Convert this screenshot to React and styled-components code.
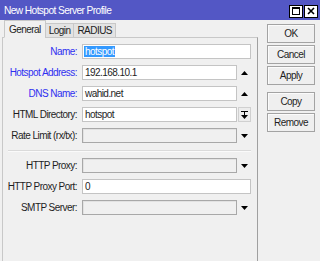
import React from "react";
import styled, { createGlobalStyle } from "styled-components";

const GlobalStyle = createGlobalStyle`
  html, body {
    margin: 0;
    padding: 0;
    background: #f0f0f0;
    overflow: hidden;
  }
  body {
    font-family: "Liberation Sans", Arial, sans-serif;
    font-size: 10px;
    letter-spacing: -0.55px;
    color: #1e1e1e;
  }
`;

export const Window = styled.div`
  width: 320px;
  height: 261px;
  display: flex;
  flex-direction: column;
  background: #f0f0f0;
  overflow: hidden;
`;

export const TitleBar = styled.div`
  height: 20px;
  flex: none;
  display: flex;
  align-items: center;
  justify-content: space-between;
  padding: 0 2px 0 4px;
  background: #5357c5;
  color: #ffffff;
  font-size: 10.2px;
  letter-spacing: -0.6px;
`;

export const TitleButtons = styled.div`
  display: flex;
  gap: 1px;
  margin-top: 2px;
`;

export const TitleButton = styled.div`
  width: 12px;
  height: 11px;
  background: #ffffff;
  border: 1px solid #000000;
  display: flex;
  align-items: center;
  justify-content: center;
`;

export const Body = styled.div`
  flex: 1;
  display: flex;
  padding-left: 2px;
  min-height: 0;
`;

export const Main = styled.div`
  width: 256px;
  display: flex;
  flex-direction: column;
`;

export const Tabs = styled.div`
  height: 18px;
  display: flex;
  align-items: flex-end;
  padding-left: 2px;
  margin-bottom: -1px;
  position: relative;
  z-index: 1;
`;

export const Tab = styled.div`
  height: ${p => (p.active ? "18px" : "15px")};
  padding: 0 ${p => (p.active ? "4px" : "3px")};
  display: flex;
  align-items: center;
  box-sizing: border-box;
  background: ${p => (p.active ? "#f0f0f0" : "#e3e3e3")};
  border: 1px solid #c8c8c8;
  border-bottom: ${p => (p.active ? "1px solid #f0f0f0" : "1px solid #c8c8c8")};
  margin-right: -1px;
  color: #1e1e1e;
`;

export const Panel = styled.div`
  flex: 1;
  border: 1px solid #c8c8c8;
  border-right-color: #a0a0a0;
  border-bottom: none;
  padding: 6px 6px 0 0;
`;

export const Form = styled.div`
  display: grid;
  grid-template-columns: 74px 1fr;
  column-gap: 5px;
  row-gap: 6px;
`;

export const Label = styled.div`
  height: 15px;
  line-height: 15px;
  text-align: right;
  white-space: nowrap;
  color: ${p => (p.blue ? "#2f2ff0" : "#1e1e1e")};
`;

export const FieldRow = styled.div`
  display: flex;
  height: 15px;
`;

export const Field = styled.div`
  flex: 1;
  box-sizing: border-box;
  height: 15px;
  line-height: 13px;
  padding-left: 2px;
  background: ${p => (p.disabled ? "#f0f0f0" : "#ffffff")};
  border: 1px solid ${p => (p.disabled ? "#a8a8a8" : "#c4c4c4")};
  box-shadow: ${p => (p.disabled ? "inset 1px 1px #e2e2e2" : "none")};
  white-space: nowrap;
  overflow: hidden;
`;

export const Selected = styled.span`
  background: #3399ff;
  color: #ffffff;
  padding: 0 1px;
  margin-left: -1px;
`;

export const ArrowBox = styled.div`
  width: 14px;
  flex: none;
  display: flex;
  align-items: center;
  justify-content: center;
`;

export const SmallButton = styled.div`
  width: 13px;
  flex: none;
  margin-left: 1px;
  box-sizing: border-box;
  border: 1px solid #d0d0d0;
  background: #ececec;
  display: flex;
  align-items: center;
  justify-content: center;
`;

export const Separator = styled.div`
  grid-column: 1 / -1;
  height: 1px;
  margin: 1px 0 0 5px;
  background: #dadada;
  border-bottom: 1px solid #fafafa;
`;

export const Side = styled.div`
  width: 48px;
  margin-left: 9px;
  padding-top: 4px;
  display: flex;
  flex-direction: column;
  gap: 2px;
`;

export const Button = styled.div`
  height: 19px;
  box-sizing: border-box;
  border: 1px solid #a3a3a3;
  box-shadow: inset 1px 1px #fbfbfb;
  background: #efefef;
  display: flex;
  align-items: center;
  justify-content: center;
  color: #1e1e1e;
  margin-top: ${p => (p.gapTop ? "5px" : "0")};
`;

const Up = () => (
  <svg width="7" height="4" viewBox="0 0 7 4">
    <polygon points="3.5,0 7,4 0,4" fill="#000" />
  </svg>
);

const Down = () => (
  <svg width="7" height="4" viewBox="0 0 7 4">
    <polygon points="0,0 7,0 3.5,4" fill="#000" />
  </svg>
);

const Collapse = () => (
  <svg width="7" height="8" viewBox="0 0 7 8">
    <rect x="0" y="0" width="7" height="1" fill="#000" />
    <rect x="3" y="1" width="1" height="3" fill="#000" />
    <polygon points="0,4 7,4 3.5,8" fill="#000" />
  </svg>
);

const MaxIcon = () => (
  <svg width="8" height="8" viewBox="0 0 8 8">
    <rect x="0.5" y="0.5" width="7" height="7" fill="none" stroke="#000" />
    <rect x="0" y="0" width="8" height="2" fill="#000" />
  </svg>
);

const CloseIcon = () => (
  <svg width="8" height="8" viewBox="0 0 8 8">
    <path d="M1 1 L7 7 M7 1 L1 7" stroke="#000" strokeWidth="1.6" />
  </svg>
);

const rows = [
  { label: "Name:", blue: true, value: <Selected>hotspot</Selected> },
  { label: "Hotspot Address:", blue: true, value: "192.168.10.1", arrow: "up" },
  { label: "DNS Name:", blue: true, value: "wahid.net", arrow: "up" },
  { label: "HTML Directory:", value: "hotspot", button: true },
  { label: "Rate Limit (rx/tx):", disabled: true, arrow: "down" },
  { separator: true },
  { label: "HTTP Proxy:", disabled: true, arrow: "down" },
  { label: "HTTP Proxy Port:", value: "0" },
  { label: "SMTP Server:", disabled: true, arrow: "down" }
];

export default function App() {
  return (
    <>
      <GlobalStyle />
      <Window>
        <TitleBar>
          <span>New Hotspot Server Profile</span>
          <TitleButtons>
            <TitleButton>
              <MaxIcon />
            </TitleButton>
            <TitleButton>
              <CloseIcon />
            </TitleButton>
          </TitleButtons>
        </TitleBar>
        <Body>
          <Main>
            <Tabs>
              <Tab active>General</Tab>
              <Tab>Login</Tab>
              <Tab>RADIUS</Tab>
            </Tabs>
            <Panel>
              <Form>
                {rows.map((row, i) =>
                  row.separator ? (
                    <Separator key={`sep-${i}`} />
                  ) : (
                    <React.Fragment key={row.label}>
                      <Label blue={row.blue}>{row.label}</Label>
                      <FieldRow>
                        <Field disabled={row.disabled}>{row.value}</Field>
                        {row.arrow ? (
                          <ArrowBox>{row.arrow === "up" ? <Up /> : <Down />}</ArrowBox>
                        ) : null}
                        {row.button ? (
                          <SmallButton>
                            <Collapse />
                          </SmallButton>
                        ) : null}
                      </FieldRow>
                    </React.Fragment>
                  )
                )}
              </Form>
            </Panel>
          </Main>
          <Side>
            <Button>OK</Button>
            <Button>Cancel</Button>
            <Button>Apply</Button>
            <Button gapTop>Copy</Button>
            <Button>Remove</Button>
          </Side>
        </Body>
      </Window>
    </>
  );
}
